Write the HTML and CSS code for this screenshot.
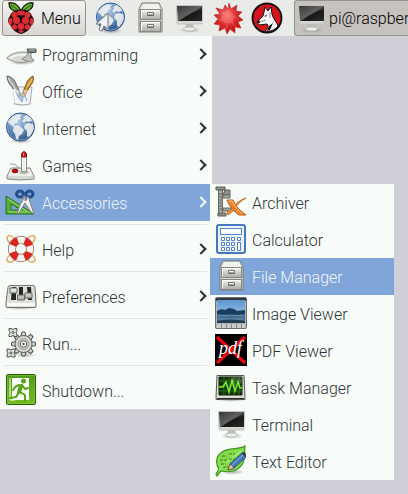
FILE: index.html
```html
<!DOCTYPE html>
<html lang="en">
<head>
<meta charset="utf-8">
<meta name="viewport" content="width=device-width, initial-scale=1">
<title>Desktop</title>
<link rel="stylesheet" href="styles.css">
</head>
<body>
<svg class="defs" width="0" height="0" aria-hidden="true">
  <defs>
    <linearGradient id="steel" x1="0" y1="0" x2="0" y2="1"><stop offset="0" stop-color="#f4f4f0"/><stop offset="1" stop-color="#a9aba6"/></linearGradient>
    <linearGradient id="dark" x1="0" y1="0" x2="1" y2="1"><stop offset="0" stop-color="#222"/><stop offset=".5" stop-color="#50524f"/><stop offset=".55" stop-color="#161616"/><stop offset="1" stop-color="#2b2b2b"/></linearGradient>
    <radialGradient id="ocean" cx=".4" cy=".3" r=".75"><stop offset="0" stop-color="#b4cde8"/><stop offset=".55" stop-color="#5c87bb"/><stop offset="1" stop-color="#244c85"/></radialGradient>
    <radialGradient id="red" cx=".45" cy=".4" r=".6"><stop offset="0" stop-color="#f88480"/><stop offset=".5" stop-color="#dc3030"/><stop offset="1" stop-color="#b80c0c"/></radialGradient>
    <linearGradient id="green" x1="0" y1="0" x2="0" y2="1"><stop offset="0" stop-color="#4f9a12"/><stop offset="1" stop-color="#72bd22"/></linearGradient>
    <linearGradient id="sky" x1="0" y1="0" x2="0" y2="1"><stop offset="0" stop-color="#5b96d2"/><stop offset="1" stop-color="#b5d0e6"/></linearGradient>
    <radialGradient id="shade"><stop offset="0" stop-color="#000" stop-opacity=".3"/><stop offset="1" stop-color="#000" stop-opacity="0"/></radialGradient>
    <g id="teeth"><path d="M-2.500-8l1-4h3l1 4zM-2.500 8l1 4h3l1-4zM-8-2.500l-4 1v3l4 1zM8-2.500l4 1v3l-4 1z"/></g>
  </defs>
  <symbol id="globe" viewBox="0 0 32 32">
    <ellipse cx="16" cy="29" rx="12" ry="3" fill="url(#shade)"/>
    <circle cx="15.500" cy="15" r="14" fill="url(#ocean)" stroke="#2d568f"/>
    <path d="M5 7l3-3 5-2 4 1-2 2 1 2-3 1-1 3-3 1 1 3-3-1-3-3-2-1zM9 14l4-1 4 3 2 2-2 4-3 2-1 4-2-1-1-5-2-3zM18 5l4-2 4 3 2 4-2-1-2 1-3-1-2 2-2-2 2-2zM20 12l4-1 4 1 1 4-2 5-3 4-2-1v-5l-3-3z" fill="#eef1ee" fill-opacity=".9"/>
    <circle cx="15.500" cy="15" r="13" fill="none" stroke="#c2d8ef" stroke-opacity=".5"/>
  </symbol>
  <symbol id="cabinet" viewBox="0 0 32 32">
    <path d="M8 1h17l3 6v23H5V7z" fill="#dcddd7" stroke="#777a73"/>
    <path d="M9 2h15l2 5H7z" fill="#f3f3ee"/>
    <rect x="6.500" y="7.500" width="20" height="10" fill="url(#steel)" stroke="#858881"/>
    <rect x="6.500" y="19.500" width="20" height="10" fill="url(#steel)" stroke="#858881"/>
    <path d="M7.500 16.500v-8h18M7.500 28.500v-8h18" fill="none" stroke="#fff"/>
    <path d="M13.500 10.500h6v3h-6zM13.500 22.500h6v3h-6z" fill="#f8f8f8" stroke="#70746d"/>
    <path d="M14 13h5M14 25h5" stroke="#555"/>
  </symbol>
  <symbol id="monitor" viewBox="0 0 32 32">
    <ellipse cx="17" cy="28" rx="11" ry="3" fill="url(#shade)"/>
    <path d="M13 22h7l1 5h-9z" fill="#b9bbb6"/>
    <ellipse cx="16.500" cy="27" rx="6" ry="2" fill="#eeeeea" stroke="#bbbdb9"/>
    <path d="M3.500 3.500h26l-.5 17.500q0 1-1 1H5q-1 0-1-1z" fill="#d7d8d4" stroke="#c0c2be"/>
    <path d="M4 4h25v15H5z" fill="url(#dark)"/>
    <path d="M4 4h25v4Q15 10 7 19H5z" fill="#fff" fill-opacity=".1"/>
  </symbol>
  <symbol id="burst" viewBox="0 0 32 32">
    <path d="M17 1l2 6 6-4-1 6 6 1-4 4 5 4-5 2 3 6-6-1 0 6-5-4-3 5-2-6-6 3 1-6-6-1 4-5-4-4 6-1L4 6l7 2 2-5 3 4z" fill="url(#red)" stroke="#c92222" stroke-width=".6"/>
    <path d="M17 4l-1 6-5 1M27 18l-5-4-2 7 5 5M15 22l-1 6M5 17l5 2 1-8-4-3" fill="none" stroke="#f9a9a0" stroke-opacity=".4" stroke-width=".8"/>
    <path d="M12 10l6-1 4 5-2 7-6 1-4-4z" fill="#fa7a78" fill-opacity=".45"/>
  </symbol>
  <symbol id="wolf" viewBox="0 0 32 32">
    <circle cx="16" cy="16" r="14.500" fill="#d4151d" stroke="#111" stroke-width="1.800"/>
    <path d="M6 20l6-6 1-4 1-5 3 4 3-4 1 7c1 5 5 8 6 12-3 4-8 6-13 5 3-2 4-5 2-7l-8 1z" fill="#f7f7f7" stroke="#111"/>
    <path d="M6 20l2-2 1 2-1 1.500zM13 14l3-1-1 1.800zM18 24l4-3-3 7-3 1z" fill="#111"/>
    <path d="M9 20l6-2M19 10v6" stroke="#777" stroke-width=".8"/>
  </symbol>
  <symbol id="raspberry" viewBox="0 0 32 32">
    <path d="M15.500 8C14 3 8 0 4 1c0 5 3 8 9 9zM16.500 8C18 3 24 0 28 1c0 5-3 8-9 9z" fill="#69ae35" stroke="#17280c" stroke-width="1.400"/>
    <path d="M6 3l7 5M26 3l-7 5" stroke="#2b5d16"/>
    <path d="M16 8c5-1 10 2 11 6 3 3 2 8-1 10-1 4-6 7-10 8-4-1-9-4-10-8-3-2-4-7-1-10 1-4 6-7 11-6z" fill="#240c0d"/>
    <g fill="#dd2d34"><ellipse cx="16" cy="11" rx="4" ry="2.400"/><circle cx="9.500" cy="13" r="3"/><circle cx="22.500" cy="13" r="3"/><circle cx="11.500" cy="18.500" r="3.600"/><circle cx="20.500" cy="18.500" r="3.600"/><ellipse cx="5.500" cy="19.500" rx="1.800" ry="3.400"/><ellipse cx="26.500" cy="19.500" rx="1.800" ry="3.400"/><circle cx="16" cy="24.500" r="3.400"/><circle cx="9.500" cy="25" r="2.700"/><circle cx="22.500" cy="25" r="2.700"/><ellipse cx="16" cy="29.500" rx="2.700" ry="1.300"/></g>
  </symbol>
</svg>

<header class="panel">
  <button class="menu-button" type="button" aria-expanded="true"><svg class="icon"><use href="#raspberry"/></svg>Menu</button>
  <button class="launcher" type="button" aria-label="Web Browser"><svg class="icon" viewBox="0 0 32 32"><use href="#globe" width="32" height="32"/><path d="M13 11v16l-4-3-2 5-3-1 2-6H1z" fill="#f2f2f2" stroke="#777"/></svg></button>
  <button class="launcher" type="button" aria-label="File Manager"><svg class="icon"><use href="#cabinet"/></svg></button>
  <button class="launcher" type="button" aria-label="Terminal"><svg class="icon"><use href="#monitor"/></svg></button>
  <button class="launcher" type="button" aria-label="Mathematica"><svg class="icon"><use href="#burst"/></svg></button>
  <button class="launcher" type="button" aria-label="Wolfram"><svg class="icon"><use href="#wolf"/></svg></button>
  <button class="task" type="button"><svg class="icon"><use href="#monitor"/></svg>pi@raspberrypi: ~</button>
</header>

<nav class="menu" aria-label="Main menu">
  <button class="item parent" type="button">
    <svg class="icon" viewBox="0 0 32 32"><ellipse cx="17" cy="25" rx="13" ry="2" fill="url(#shade)"/><path d="M1.500 20C7 15 14 13 23 14.500l1 8.500C16 26 7 24 1.500 20z" fill="#d7d9d2" stroke="#92958d"/><path d="M5 20q8-4 18-3" fill="none" stroke="#f8f8f4" stroke-width="1.500"/><path d="M22 23q6 2 7-1c-3-1-4-4-2-9l-3-1c0 4-2 6-7 9z" fill="#c1c4bb" stroke="#85887f"/><path d="M22 11h9v3.500h-8z" fill="#777a75" stroke="#555854"/><path d="M24 12h6" stroke="#b4b7b1"/></svg>Programming</button>
  <button class="item parent" type="button">
    <svg class="icon" viewBox="0 0 32 32"><ellipse cx="17" cy="29" rx="11" ry="2" fill="url(#shade)"/><path d="M8 12h19l-2 17q-7 2-15 0z" fill="#eff1f1" stroke="#a8abad"/><path d="M2 1c5 1 8 4 9 8l6 13-3 1-7-11C4 9 2 5 2 1z" fill="#a4a8a6" stroke="#5c605d"/><path d="M3 3l12 18" stroke="#e9ecea"/><path d="M28 1c-4 2-6 5-7 9l-5 11 3 1 6-11c3-3 4-6 3-10z" fill="#d2963b" stroke="#805018"/><path d="M27 4l-5 8" stroke="#f4cf83"/><path d="M9 15h17l-2 13q-6 2-13 0z" fill="#f4f6f8" fill-opacity=".5"/><path d="M14 18l4 5-1 4-3-4zM18 16l2 5 2 5" fill="#b3cbe6" stroke="#7fa5d6"/><path d="M18 17l2 4" stroke="#e58479"/><path d="M9 14l2 14" stroke="#fff" stroke-width="2"/></svg>Office</button>
  <button class="item parent" type="button"><svg class="icon"><use href="#globe"/></svg>Internet</button>
  <button class="item parent" type="button">
    <svg class="icon" viewBox="0 0 32 32"><path d="M5 15q6-1 9 5" fill="none" stroke="#999"/><path d="M6 19h19l4 8v3q-13 2-27 0v-3z" fill="#d7d8d3" stroke="#858780"/><path d="M6 20h19l3 7H3z" fill="#efefeb"/><ellipse cx="10" cy="22" rx="3" ry="1.800" fill="#c40c0c" stroke="#830909"/><ellipse cx="19" cy="23" rx="4.500" ry="2" fill="#b4b6b0"/><path d="M16.500 5q2.500-3 5 0v17q-2.500 2-5 0z" fill="#f2f2ef" stroke="#8b8d87"/><path d="M16.500 8V5q2.500-5 5 0v3z" fill="#cf1717" stroke="#8d1616"/><path d="M18.500 4v3" stroke="#f89696"/></svg>Games</button>
  <div class="group">
    <button class="item parent selected" type="button" aria-expanded="true">
      <svg class="icon" viewBox="0 0 32 32"><path fill-rule="evenodd" d="M1 10l28 18H1zM6 18v6h10z" fill="#54ad39" stroke="#27711f"/><path d="M3 13l22 14M4 25v1h18" stroke="#9adb78" fill="none"/><g fill="none" stroke="#234f91" stroke-width="3"><ellipse cx="15" cy="8" rx="3.500" ry="3"/><ellipse cx="24.500" cy="8" rx="3.500" ry="3"/></g><path d="M18 10l3 4 2-4 1 3 5 15-3-2-6-9-6 10-2 1 3-9 5-9z" fill="#f1f2ef" stroke="#80837d"/><circle cx="20.500" cy="14" r="1" fill="#666"/></svg>Accessories</button>
    <div class="submenu" role="group" aria-label="Accessories">
      <button class="item" type="button">
        <svg class="icon" viewBox="0 0 32 32"><path d="M1 1h9v3H1zM10 4h5v5H8zM3 27h8v3H3z" fill="#8f928d" stroke="#5b5e58"/><path d="M3.500 4h4v23h-4zM8 9h7v3H8zM8 22h9v3H8z" fill="#a3a69f" stroke="#666963"/><path d="M3 8h5M3 11h5M3 14h5M3 17h5M3 20h5M3 23h5" stroke="#696c66"/><path d="M12 14h6q4 9 13 15h-7Q16 24 12 14z" fill="#ee842c" stroke="#c05d16"/><path d="M31 12Q23 16 18 25l-5 4-1-3 5-3Q22 15 31 12z" fill="#f09443" stroke="#c96a21"/><path d="M14 15h3q4 8 10 13" stroke="#fbc184" fill="none"/></svg>Archiver</button>
      <button class="item" type="button">
        <svg class="icon" viewBox="0 0 32 32"><rect x="2" y="2" width="28" height="28" rx="2" fill="#edf3fb" stroke="#4279bf" stroke-width="2"/><g fill="#fff" stroke="#5183c0"><rect x="5.500" y="5.500" width="21" height="6"/><path d="M6.500 14.500h3v3h-3zM11.500 14.500h3v3h-3zM16.500 14.500h3v3h-3zM22.500 14.500h3v3h-3zM6.500 19.500h3v3h-3zM11.500 19.500h3v3h-3zM16.500 19.500h3v3h-3zM6.500 24.500h3v3h-3zM11.500 24.500h3v3h-3zM16.500 24.500h3v3h-3zM22.500 19.500h3v8h-3z"/></g></svg>Calculator</button>
      <button class="item selected" type="button"><svg class="icon"><use href="#cabinet"/></svg>File Manager</button>
      <button class="item" type="button">
        <svg class="icon" viewBox="0 0 32 32"><rect x=".5" y=".5" width="31" height="31" rx="1" fill="#b0b4b5" stroke="#6d7172"/><path d="M1 1h30v3H1z" fill="#30383e"/><path d="M2 3h28v23H2z" fill="url(#sky)"/><path d="M2 14h28v12H2z" fill="#426c8f"/><path d="M2 14q4-3 8-1l4-2 5 1 3 2 8-1v4q-14 2-28 0z" fill="#183e5c"/><path d="M3 19q12-2 26 0M3 22h25" stroke="#86abc8" stroke-opacity=".6" fill="none"/><path d="M2 24q13-3 28 0v2H2z" fill="#203e55"/><path d="M2 27h28v4H2z" fill="#c9ccca"/><path d="M6.500 27v4M11.500 27v4M16.500 27v4M21.500 27v4M26.500 27v4" stroke="#858987"/></svg>Image Viewer</button>
      <button class="item" type="button">
        <svg class="icon" viewBox="0 0 32 32"><path d="M0 0h32v32H0z"/><path d="M2 3l28 26M30 3L2 29" stroke="#e50914" stroke-width="3.500"/><text class="pdf-mark" x="4" y="20">pdf</text></svg>PDF Viewer</button>
      <button class="item" type="button">
        <svg class="icon" viewBox="0 0 32 32"><ellipse cx="16" cy="29" rx="15" ry="2" fill="url(#shade)"/><path d="M2 4.500h27l1 22v2H1v-2z" fill="#ddded9" stroke="#565953"/><path d="M4 6h23v18H4z" fill="#123707" stroke="#10200b"/><path d="M4 10h23M4 15h23M4 20h23M9 6v18M14 6v18M19 6v18M24 6v18" stroke="#2f6a1c"/><path d="M18 6h9v7q-5 0-12 3z" fill="#fff" fill-opacity=".15"/><path d="M4 16h4l3-5 3 10 3-12 3 11 3-9 2 6h2" stroke="#7aed35" stroke-width="1.500" fill="none"/><path d="M2 27.500h27" stroke="#272925"/></svg>Task Manager</button>
      <button class="item" type="button"><svg class="icon"><use href="#monitor"/></svg>Terminal</button>
      <button class="item" type="button">
        <svg class="icon" viewBox="0 0 32 32"><ellipse cx="18" cy="27" rx="12" ry="3" fill="url(#shade)"/><path d="M30 1c-1 6 1 11-2 17-4 8-13 10-22 8l-4 5-1-2 3-5C0 18 1 11 7 7c7-5 17-2 23-6z" fill="#85db4b" stroke="#3a9420" stroke-width="1.200"/><path d="M4 25Q12 16 26 6" stroke="#c4f49a" fill="none"/><path d="M7 11h5M14 9h6M5 15h7M14 14h5M6 19h5M8 22h5" stroke="#367d23" stroke-dasharray="3 1"/><path d="M13 25l2-6L27 8l4 4-12 11z" fill="#4778b8" stroke="#234b82"/><path d="M17 20L28 10" stroke="#8eb5e4"/><path d="M27 8l1-1q3 0 3 4v1z" fill="#31353b"/><path d="M15 19l4 4-6 2z" fill="#edcfa4" stroke="#5e4b35" stroke-width=".7"/></svg>Text Editor</button>
    </div>
  </div>
  <hr class="rule">
  <button class="item parent" type="button">
    <svg class="icon" viewBox="0 0 32 32"><path d="M9 5Q3 0 2 5q0 3 3 5M23 5q6-5 7 0 0 3-3 5M5 22q-6 5-1 7 3 1 6-3M27 22q6 5 1 7-3 1-6-3" fill="none" stroke="#dfae68" stroke-width="1.500"/><circle cx="16" cy="16" r="9" fill="none" stroke="#8d6d66" stroke-width="8"/><circle cx="16" cy="16" r="9" fill="none" stroke="#f5f4f0" stroke-width="6.500"/><circle cx="16" cy="16" r="9" fill="none" stroke="#d9271d" stroke-width="7" stroke-dasharray="7.070 7.070" stroke-dashoffset="-3.530"/></svg>Help</button>
  <hr class="rule">
  <button class="item parent" type="button">
    <svg class="icon" viewBox="0 0 32 32"><ellipse cx="16" cy="28" rx="16" ry="2" fill="url(#shade)"/><path d="M5 5.500h23q2 0 2 2l1 15v4q0 1-1 1H2q-1 0-1-1v-4l2-15q0-2 2-2z" fill="#dedfdb" stroke="#70736d"/><path d="M2 23h28v3H2z" fill="#f9f9f6"/><path d="M7 7h4v13H6zM14 7h4v13h-4zM22 7h4l1 13h-4z" fill="#242622"/><path d="M5 8h7v5H5zM12.500 15h7v5h-7zM20 13h7v5h-7z" fill="url(#steel)" stroke="#656861"/></svg>Preferences</button>
  <hr class="rule">
  <button class="item" type="button">
    <svg class="icon" viewBox="0 0 32 32"><ellipse cx="20" cy="28" rx="11" ry="3" fill="url(#shade)"/><g fill="#d0d3cd" stroke="#4e514c"><use href="#teeth" transform="translate(18.500 17)"/><use href="#teeth" transform="translate(18.500 17) rotate(45)"/></g><circle cx="18.500" cy="17" r="8.500" fill="#d5d7d2" stroke="#666963"/><circle cx="18.500" cy="17" r="5.500" fill="#c0c3bd" stroke="#a2a59f"/><circle cx="18.500" cy="17" r="3.200" fill="#f7f9f5" stroke="#666963"/><circle cx="18.500" cy="17" r="1.200" fill="#555"/><g fill="#dfe1dc" stroke="#4e514c"><path d="M4 1.500h2l2 1 2-1h2v2l-1 2 1 2v2h-2l-2-1-2 1H4v-2l1-2-1-2zM2 22h2l2 1 2-1h2v2l-1 2 1 2v2H8l-2-1-2 1H2v-2l1-2-1-2z"/><circle cx="8" cy="5.500" r="1"/><circle cx="6" cy="26" r="1"/></g></svg>Run...</button>
  <hr class="rule">
  <button class="item" type="button">
    <svg class="icon" viewBox="0 0 32 32"><rect x="1.500" y=".5" width="29" height="30" rx="1.500" fill="url(#green)" stroke="#2b6007"/><rect x="2.500" y="1.500" width="27" height="28" fill="none" stroke="#86c745" stroke-opacity=".6"/><path d="M7 4h17v22H7z" fill="#fafdf7"/><path d="M5 4v22h5" stroke="#fff" fill="none"/><g fill="none" stroke="#58a315" stroke-linecap="round" stroke-linejoin="round"><path d="M16 12l-2 6" stroke-width="4"/><path d="M15 18l5 3v6M14 18l-3 5-6 1M14 11l-4 2-2 3M17 11l3 4 3-1" stroke-width="2"/></g><circle cx="18.500" cy="7" r="2.500" fill="#58a315"/></svg>Shutdown...</button>
</nav>
</body>
</html>
```
FILE: styles.css
```css
* {
  box-sizing: border-box;
}

body {
  margin: 0;
  min-height: 100vh;
  background: #d0cfd8;
  color: #2e3436;
  font: 300 16px/20px Roboto, "Liberation Sans", sans-serif;
}

button {
  margin: 0;
  border: 0;
  background: none;
  color: inherit;
  font: inherit;
  text-align: left;
  white-space: nowrap;
}

.defs {
  position: absolute;
}

.icon {
  display: block;
  flex: none;
  width: 32px;
  height: 32px;
}

.pdf-mark {
  fill: #fff;
  font: italic 18px "Liberation Serif", serif;
}

.panel {
  display: flex;
  align-items: center;
  gap: 7px;
  height: 36px;
  padding-left: 2px;
  background: #e8ebe8;
}

.menu-button,
.task {
  display: flex;
  align-items: flex-start;
  height: 36px;
  padding: 0;
  border: 1px solid #96938e;
  border-radius: 3px;
  color: #000;
  line-height: 36px;
}

.menu-button .icon,
.task .icon {
  margin-top: 1px;
}

.menu-button {
  flex: none;
  gap: 4px;
  width: 84px;
  padding-left: 2px;
  margin-right: 2px;
  background: linear-gradient(#f4f3f2, #d8d6d3);
}

.launcher {
  flex: none;
  padding: 0;
}

.task {
  flex: 1;
  gap: 2px;
  min-width: 0;
  margin-left: 4px;
  border-right: 0;
  border-radius: 3px 0 0 3px;
  background: #c6c3be;
  overflow: hidden;
}

.menu {
  width: 212px;
  background: #f8fcf8;
}

.item {
  display: flex;
  align-items: flex-start;
  gap: 5px;
  width: 100%;
  height: 37px;
  padding: 2px 5px 0;
  line-height: 35px;
}

.parent::after {
  content: "";
  align-self: center;
  width: 6px;
  height: 6px;
  margin: 0 2px 3px auto;
  border: solid #2e3436;
  border-width: 2px 2px 0 0;
  transform: rotate(45deg);
}

.selected {
  background: #80a6d9;
  color: #f2f5fa;
}

.selected::after {
  border-color: #f2f5fa;
}

.group {
  position: relative;
}

.submenu {
  position: absolute;
  top: 0;
  left: 210px;
  width: 184px;
  background: #f8fcf8;
}

.rule {
  height: 1px;
  margin: 3px 5px 6px;
  border: 0;
  background: #e0e3e0;
}
```
